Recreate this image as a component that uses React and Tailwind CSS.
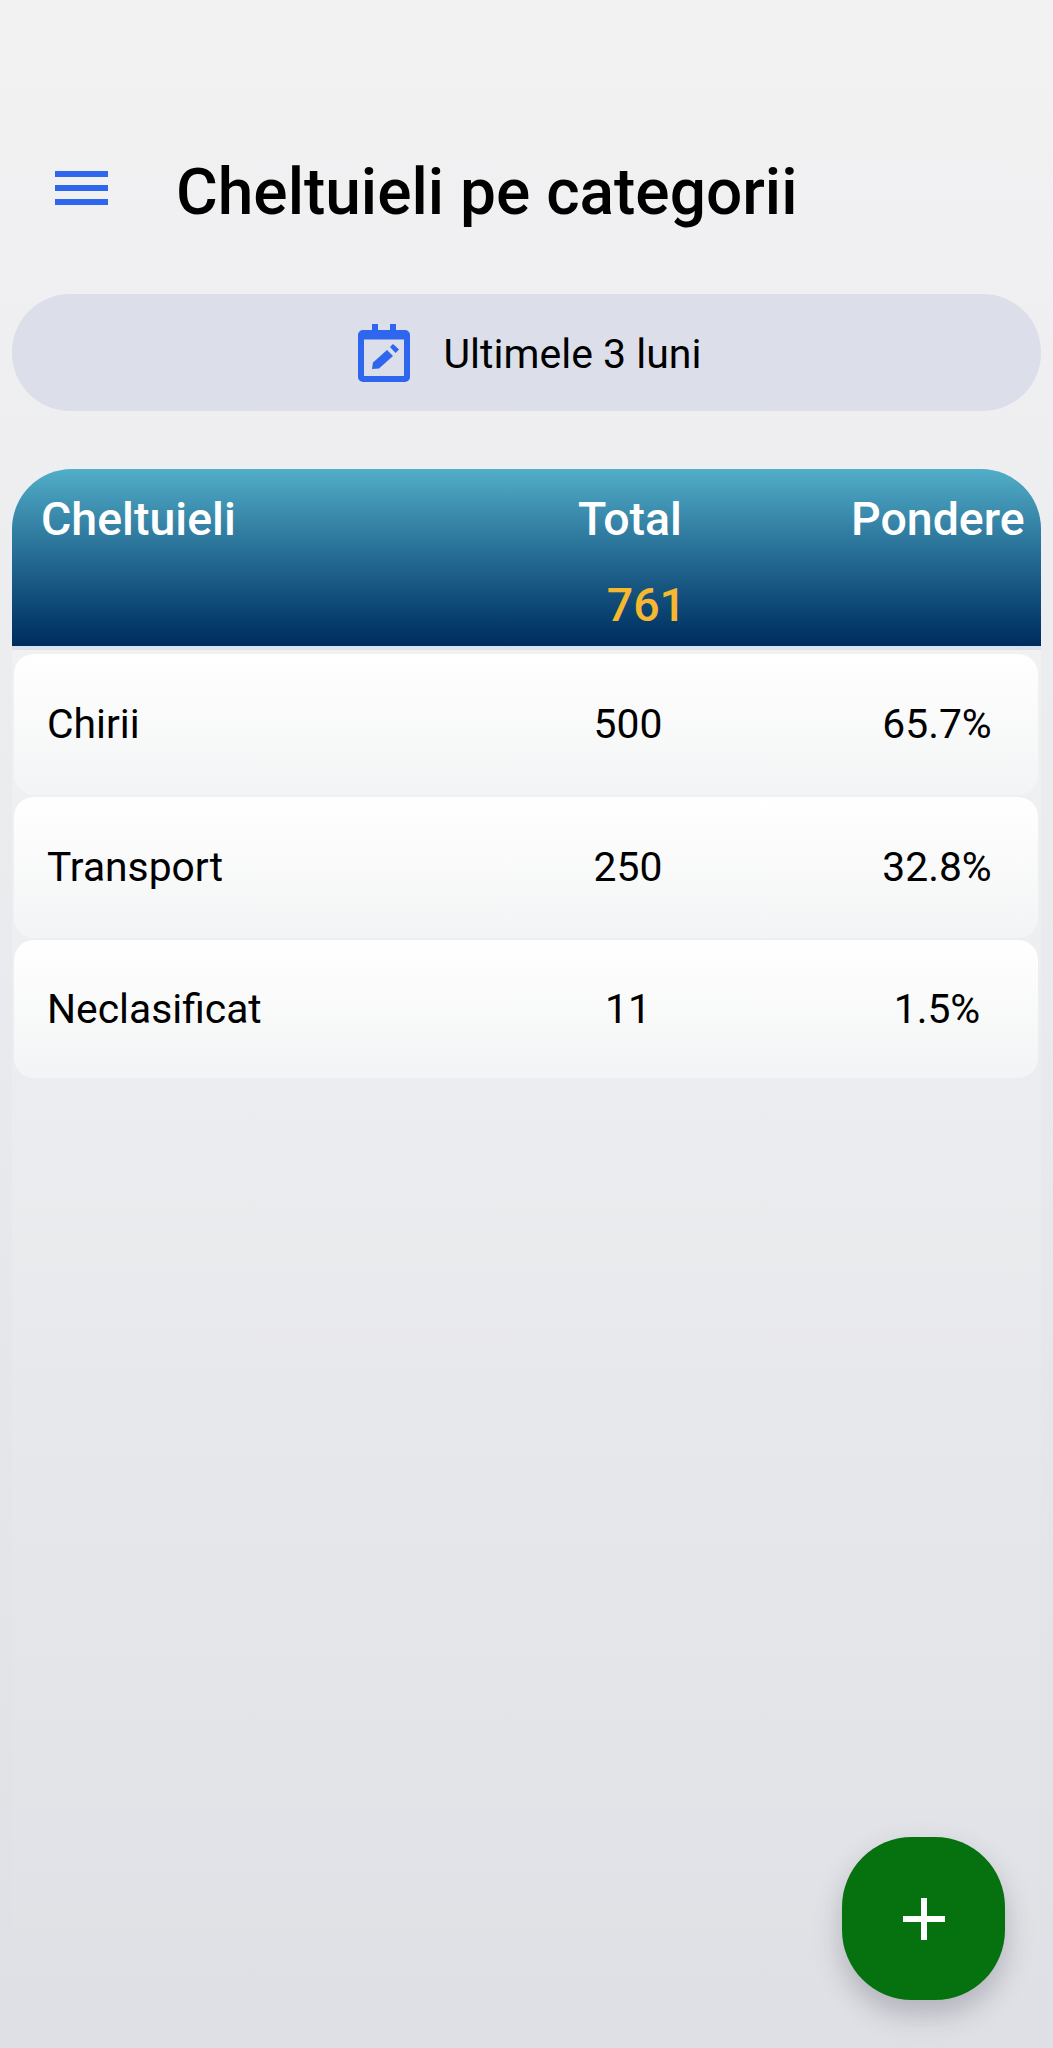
const rows = [
  { name: "Chirii", total: "500", share: "65.7%", height: "h-[141px]" },
  { name: "Transport", total: "250", share: "32.8%", height: "h-[141px]" },
  { name: "Neclasificat", total: "11", share: "1.5%", height: "h-[138px]" },
];

function CalendarEditIcon() {
  return (
    <svg width="53" height="58" viewBox="0 0 53 58" fill="none" className="shrink-0">
      <rect x="14" y="0" width="6" height="8" fill="#2f66ee" />
      <rect x="32" y="0" width="6" height="8" fill="#2f66ee" />
      <path
        fillRule="evenodd"
        clipRule="evenodd"
        d="M5 6h42a5 5 0 0 1 5 5v42a5 5 0 0 1-5 5H5a5 5 0 0 1-5-5V11a5 5 0 0 1 5-5Zm1 9.500v36.500h40V15.500H6Z"
        fill="#2f66ee"
      />
      <path d="M14 45l1-6.500L29 26l6 6-14 12.500L14 45Z" fill="#2f66ee" />
      <path d="M32 23l3-3 6 5.500-3.500 3.500-5.500-6Z" fill="#2f66ee" />
    </svg>
  );
}

export default function App() {
  return (
    <div className="relative flex h-[2048px] w-full flex-col overflow-hidden bg-gradient-to-b from-[#f2f2f3] via-[#e9eaed] to-[#dfe0e5] pt-[139px] font-['Roboto',sans-serif] text-black">
      <header className="flex h-[98px] items-center pl-[55px]">
        <div className="flex w-[53px] flex-col gap-[8px]">
          <span className="h-[6px] bg-[#2f66ee]" />
          <span className="h-[6px] bg-[#2f66ee]" />
          <span className="h-[6px] bg-[#2f66ee]" />
        </div>
        <h1 className="ml-[68px] pt-[10px] text-[64px] font-medium leading-none">Cheltuieli pe categorii</h1>
      </header>

      <div className="mx-[12px] mt-[57px] flex h-[117px] items-center justify-center gap-[33px] rounded-[58px] bg-[#dcdfe9] pl-[6px]">
        <CalendarEditIcon />
        <span className="pt-[3px] text-[41px] leading-none">Ultimele 3 luni</span>
      </div>

      <section className="mt-[58px] flex flex-1 flex-col">
        <div className="mx-[12px] h-[177px] rounded-t-[60px] bg-gradient-to-b from-[#52aec8] to-[#002c5f] text-white">
          <div className="flex h-[88px] items-center pt-[12px] text-[46.500px] font-medium leading-none">
            <span className="ml-[29px] w-[537px]">Cheltuieli</span>
            <span className="w-[102px] text-right whitespace-nowrap">Total</span>
            <span className="ml-[171px] whitespace-nowrap">Pondere</span>
          </div>
          <div className="flex h-[86px] items-center pt-[10px] text-[46.500px] font-medium leading-none text-[#f5b82e]">
            <span className="ml-[571px] w-[103px] text-right">761</span>
          </div>
        </div>
        <div className="mx-[12px] h-[4px] bg-[#dde3ee]" />

        <div className="mx-[12px] flex flex-1 flex-col gap-[2px] bg-gradient-to-b from-white/25 via-white/10 to-white/0 pl-[2px] pr-[3px] pt-[4px]">
          {rows.map((row) => (
            <div
              key={row.name}
              className={`flex shrink-0 items-center rounded-[20px] bg-gradient-to-b from-white to-[#f3f4f5] text-[40.800px] leading-none ${row.height}`}
            >
              <span className="w-[514px] pl-[33px]">{row.name}</span>
              <span className="w-[200px] text-center">{row.total}</span>
              <span className="ml-[109px] w-[200px] text-center">{row.share}</span>
            </div>
          ))}
        </div>
      </section>

      <button
        type="button"
        className="absolute left-[842px] top-[1837px] flex h-[163px] w-[163px] items-center justify-center rounded-[70px] bg-[#06710f] shadow-[0_14px_28px_rgba(60,60,80,0.28)]"
      >
        <svg width="42" height="42" viewBox="0 0 42 42" fill="#ffffff">
          <rect x="18" y="0" width="6" height="42" />
          <rect x="0" y="18" width="42" height="6" />
        </svg>
      </button>
    </div>
  );
}
